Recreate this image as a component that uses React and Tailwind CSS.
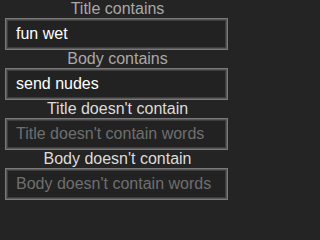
const fields = [
  { label: "Title contains", value: "fun wet", placeholder: "Title contains words", dim: true },
  { label: "Body contains", value: "send nudes", placeholder: "Body contains words", dim: true },
  { label: "Title doesn't contain", value: "", placeholder: "Title doesn't contain words", dim: false },
  { label: "Body doesn't contain", value: "", placeholder: "Body doesn't contain words", dim: false },
];

export default function App() {
  return (
    <div className="min-h-screen w-full bg-[#242424]">
      <div className="w-[235px] pb-[2px] font-['Liberation_Sans',Arial,sans-serif]">
        {fields.map((f) => (
          <div key={f.label} className="flex flex-col">
            <label
              className={`block h-[18px] text-center text-[16px] leading-[18px] ${
                f.dim ? "text-[#a9a9a9]" : "text-[#dcdcdc]"
              }`}
            >
              {f.label}
            </label>
            <input
              type="text"
              defaultValue={f.value}
              placeholder={f.placeholder}
              className="ml-[5px] box-border h-[32px] w-[223px] border border-[#7a7a7a] bg-[#222222] px-[10px] text-[16px] text-white shadow-[inset_0_0_0_1px_#585858,inset_0_0_0_2px_#3c3c3c] outline-none placeholder:text-[#6f6f6f]"
            />
          </div>
        ))}
      </div>
    </div>
  );
}
